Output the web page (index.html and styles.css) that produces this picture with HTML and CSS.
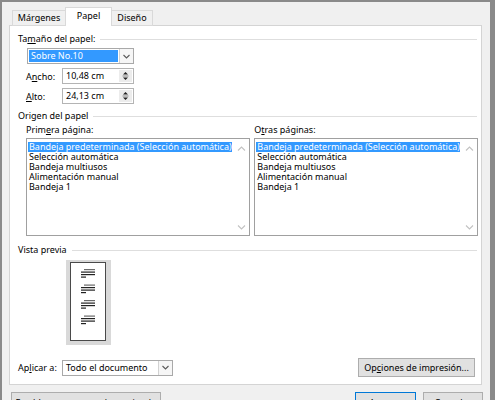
FILE: index.html
```html
<!DOCTYPE html>
<html lang="es">
<head>
<meta charset="utf-8">
<link rel="stylesheet" href="styles.css">
</head>
<body>
<div class="win">
  <div class="tabs">
    <div class="tab t1">Márgenes</div>
    <div class="tab active t2">Papel</div>
    <div class="tab t3">Diseño</div>
  </div>
  <div class="panel">
    <div class="group-h first"><span>Ta<u>m</u>año del papel:</span><i class="rule"></i></div>
    <div class="combo size">
      <span class="sel">Sobre No.10</span>
      <span class="drop"><svg width="7" height="5" viewBox="0 0 7 5"><path d="M0.5 1 L3.5 4 L6.5 1" fill="none" stroke="#5a5a5a" stroke-width="1.1"/></svg></span>
    </div>
    <div class="field">
      <span class="lbl">A<u>n</u>cho:</span>
      <div class="spin"><span class="val">10,48 cm</span><span class="arrows"><svg width="11" height="14" viewBox="0 0 11 14"><path d="M3 5.5 L5.5 3 L8 5.5 Z" fill="#222"/><path d="M2.5 7 H8.5" stroke="#888" stroke-width="1"/><path d="M3 8.5 L8 8.5 L5.5 11 Z" fill="#222"/></svg></span></div>
    </div>
    <div class="field">
      <span class="lbl"><u>A</u>lto:</span>
      <div class="spin"><span class="val">24,13 cm</span><span class="arrows"><svg width="11" height="14" viewBox="0 0 11 14"><path d="M3 5.5 L5.5 3 L8 5.5 Z" fill="#222"/><path d="M2.5 7 H8.5" stroke="#888" stroke-width="1"/><path d="M3 8.5 L8 8.5 L5.5 11 Z" fill="#222"/></svg></span></div>
    </div>

    <div class="group-h second"><span>Origen del papel</span><i class="rule"></i></div>
    <div class="cols">
      <div class="col left">
        <div class="col-lbl">Prim<u>e</u>ra página:</div>
        <div class="list">
          <div class="items">
            <div class="item on">Bandeja predeterminada (Selección automática)</div>
            <div class="item">Selección automática</div>
            <div class="item">Bandeja multiusos</div>
            <div class="item">Alimentación manual</div>
            <div class="item">Bandeja 1</div>
          </div>
          <div class="sbar">
            <svg width="9" height="6" viewBox="0 0 9 6"><path d="M1 4.5 L4.5 1 L8 4.5" fill="none" stroke="#c2c2c2" stroke-width="1.1"/></svg>
            <svg width="9" height="6" viewBox="0 0 9 6"><path d="M1 1.5 L4.5 5 L8 1.5" fill="none" stroke="#c2c2c2" stroke-width="1.1"/></svg>
          </div>
        </div>
      </div>
      <div class="col right">
        <div class="col-lbl">O<u>t</u>ras páginas:</div>
        <div class="list">
          <div class="items">
            <div class="item on">Bandeja predeterminada (Selección automática)</div>
            <div class="item">Selección automática</div>
            <div class="item">Bandeja multiusos</div>
            <div class="item">Alimentación manual</div>
            <div class="item">Bandeja 1</div>
          </div>
          <div class="sbar">
            <svg width="9" height="6" viewBox="0 0 9 6"><path d="M1 4.5 L4.5 1 L8 4.5" fill="none" stroke="#c2c2c2" stroke-width="1.1"/></svg>
            <svg width="9" height="6" viewBox="0 0 9 6"><path d="M1 1.5 L4.5 5 L8 1.5" fill="none" stroke="#c2c2c2" stroke-width="1.1"/></svg>
          </div>
        </div>
      </div>
    </div>

    <div class="group-h third"><span>Vista previa</span><i class="rule"></i></div>
    <div class="preview">
      <div class="page">
        <svg width="34" height="77" viewBox="0 0 34 77">
          <g>
            <rect x="13" y="6" width="11" height="1.2" fill="#6a6a6a"/>
            <rect x="10" y="8.5" width="14" height="1.2" fill="#222"/>
            <rect x="10" y="11" width="14" height="1.2" fill="#222"/>
            <rect x="10" y="13.5" width="5" height="1.2" fill="#222"/>
          </g>
          <g transform="translate(0 15.5)">
            <rect x="13" y="6" width="11" height="1.2" fill="#6a6a6a"/>
            <rect x="10" y="8.5" width="14" height="1.2" fill="#222"/>
            <rect x="10" y="11" width="14" height="1.2" fill="#222"/>
            <rect x="10" y="13.5" width="5" height="1.2" fill="#222"/>
          </g>
          <g transform="translate(0 31)">
            <rect x="13" y="6" width="11" height="1.2" fill="#6a6a6a"/>
            <rect x="10" y="8.5" width="14" height="1.2" fill="#222"/>
            <rect x="10" y="11" width="14" height="1.2" fill="#222"/>
            <rect x="10" y="13.5" width="5" height="1.2" fill="#222"/>
          </g>
          <g transform="translate(0 46.5)">
            <rect x="13" y="6" width="11" height="1.2" fill="#6a6a6a"/>
            <rect x="10" y="8.5" width="14" height="1.2" fill="#222"/>
            <rect x="10" y="11" width="14" height="1.2" fill="#222"/>
            <rect x="10" y="13.5" width="5" height="1.2" fill="#222"/>
          </g>
        </svg>
      </div>
    </div>

    <div class="apply-row">
      <div class="apply">
        <span class="lbl">Ap<u>l</u>icar a:</span>
        <div class="combo scope">
          <span class="plain">Todo el documento</span>
          <span class="drop"><svg width="7" height="5" viewBox="0 0 7 5"><path d="M0.5 1 L3.5 4 L6.5 1" fill="none" stroke="#5a5a5a" stroke-width="1.1"/></svg></span>
        </div>
      </div>
      <button class="btn opts">Op<u>c</u>iones de impresión...</button>
    </div>
  </div>

  <div class="footer">
    <button class="btn setdef">Establecer como predeterminado</button>
    <div class="ok-cancel">
      <button class="btn default">Aceptar</button>
      <button class="btn cancel">Cancelar</button>
    </div>
  </div>
</div>
</body>
</html>
```

FILE: styles.css
```css
* { box-sizing: border-box; }
html, body { margin: 0; padding: 0; background: #8a8a8a; }
body { width: 495px; height: 400px; overflow: hidden; font-family: "Noto Sans", "Open Sans", sans-serif; font-size: 9px; color: #000; }
u { text-decoration: underline; text-underline-offset: 1px; text-decoration-thickness: 1px; }

.win {
  width: 495px; height: 400px; overflow: hidden;
  border-left: 2px solid #8a8a8a; border-top: 2px solid #8a8a8a; border-right: 5px solid #8a8a8a;
  background: #f0f0f0;
  padding-left: 7px;
}

.tabs { display: flex; align-items: flex-end; height: 24px; margin-bottom: -1px; padding-left: 3px; }
.tab {
  height: 16px; border: 1px solid #d9d9d9; background: #f0f0f0;
  text-align: center; line-height: 14px; margin-left: -1px;
}
.tab.t1 { width: 54px; margin-left: 0; }
.tab.t2 { width: 47px; }
.tab.t3 { width: 42px; }
.tab.active { height: 19px; background: #fff; border-bottom: none; position: relative; z-index: 1; line-height: 16px; }

.panel {
  width: 473px; height: 360px; background: #fff; border: 1px solid #d4d4d4;
  padding: 0 3px 0 8px;
}

.group-h { display: flex; align-items: center; height: 12px; line-height: 12px; }
.group-h .rule { flex: 1; height: 1px; background: #dedede; margin: 0 1px 0 5px; }
.group-h.first { margin-top: 7px; }
.group-h.second { margin-top: 6px; }
.group-h.third { margin-top: 8px; }

.combo { display: flex; height: 16px; border: 1px solid #a9a9a9; background: #fff; }
.combo.size { width: 107px; margin: 3px 0 0 9px; }
.combo .sel { flex: 1; margin: 1px; background: #3399ff; color: #fff; line-height: 12px; padding-left: 2px; }
.combo .plain { flex: 1; line-height: 14px; padding-left: 3px; }
.combo .drop { width: 14px; border-left: 1px solid #d2d2d2; background: #f6f6f6; display: flex; align-items: center; justify-content: center; }

.field { display: flex; align-items: center; margin: 4px 0 0 8px; height: 16px; }
.field .lbl { width: 36px; }
.spin { display: flex; width: 72px; height: 16px; border: 1px solid #b4b4b4; background: #fff; }
.spin .val { flex: 1; line-height: 14px; padding-left: 3px; }
.spin .arrows { width: 13px; display: flex; align-items: center; justify-content: center; background: #ececec; margin: 1px; }

.cols { display: flex; gap: 4px; margin: 2px 0 0 8px; }
.col.left { width: 225px; }
.col.right { width: 224px; }
.col-lbl { height: 12px; line-height: 12px; margin-bottom: 2px; }
.list { display: flex; height: 98px; border: 1px solid #a0a0a0; background: #fff; }
.items { flex: 1; padding: 3px 1px 0 1px; min-width: 0; }
.item { height: 10px; line-height: 10px; padding-left: 1px; white-space: nowrap; }
.item.on { background: #3399ff; color: #fff; }
.sbar { width: 16px; flex: none; display: flex; flex-direction: column; justify-content: space-between; align-items: center; padding: 7px 0 5px; }

.preview { width: 45px; height: 85px; background: #d9d9d9; margin: 4px 0 0 48px; padding: 2px 0 0 4px; }
.page { width: 36px; height: 79px; background: #fff; border: 1px solid #4a4a4a; border-left-width: 1.5px; }
.page svg { display: block; }

.apply-row { display: flex; justify-content: space-between; align-items: center; margin-top: 13px; padding-right: 3px; }
.apply { display: flex; align-items: center; }
.apply .lbl { width: 44px; }
.combo.scope { width: 111px; }

.btn {
  font: inherit; color: #000; background: #e1e1e1; border: 1px solid #adadad;
  padding: 0; margin: 0; height: 19px; line-height: 17px; text-align: center;
}
.btn.opts { width: 117px; }

.footer { display: flex; justify-content: space-between; margin-top: 7px; padding: 0 7px 0 2px; }
.footer .btn { height: 21px; line-height: 17px; padding: 0; }
.btn.setdef { width: 150px; }
.ok-cancel { display: flex; gap: 7px; }
.btn.default { width: 61px; border-color: #0078d7; }
.btn.cancel { width: 60px; }
```
